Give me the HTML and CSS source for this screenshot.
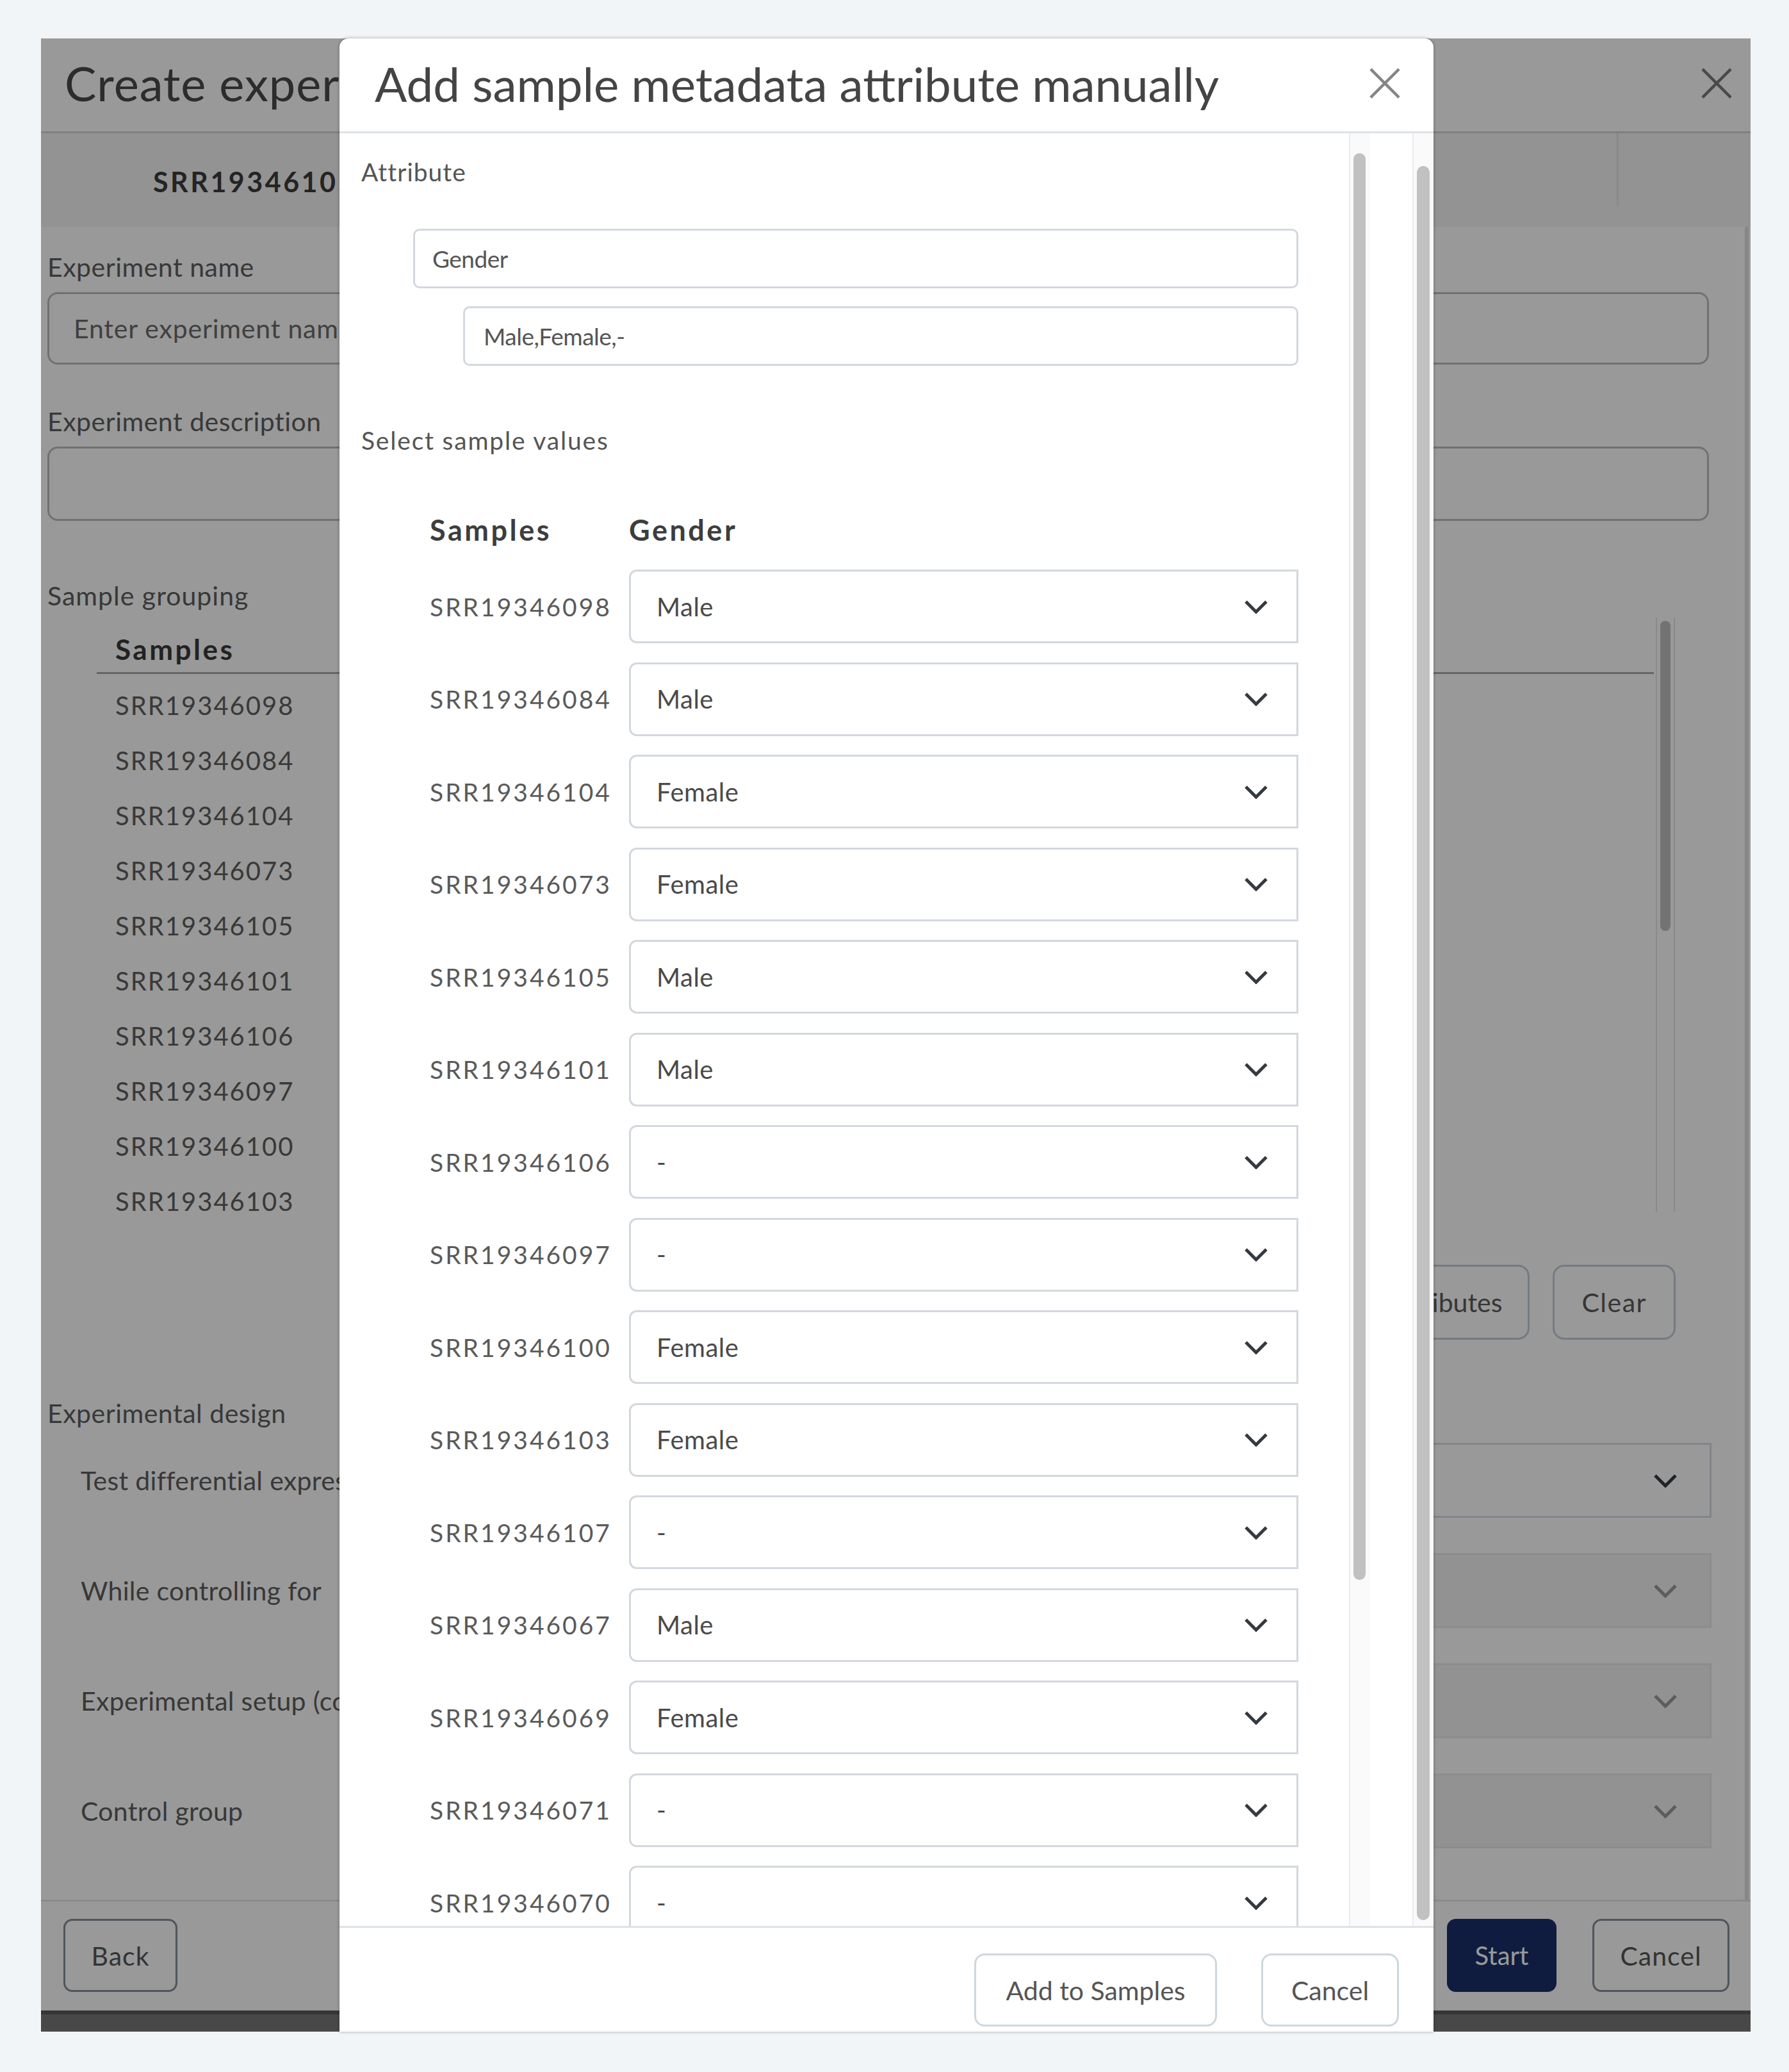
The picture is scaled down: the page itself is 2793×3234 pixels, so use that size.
FILE: index.html
```html
<!DOCTYPE html>
<html lang="en">
<head>
    <meta charset="UTF-8">
    <meta name="viewport" content="width=device-width, initial-scale=1.0">
    <title>Create experiment</title>
    <link rel="stylesheet" href="styles.css">
</head>
<body>
    <div class="wizard">
        <div class="wizard-header">
            <h1>Create experiment</h1>
            <span class="close-icon">
                <svg viewBox="0 0 52 52"><path d="M3 3 L49 49 M49 3 L3 49"/></svg>
            </span>
        </div>

        <div class="wizard-tabs">
            <div class="tab-cell main">SRR19346105</div>
            <div class="tab-cell"></div>
        </div>

        <div class="wizard-body">
            <label class="field-label">Experiment name</label>
            <div class="text-input placeholder">Enter experiment name</div>

            <label class="field-label">Experiment description</label>
            <div class="text-input tall"></div>

            <label class="field-label grouping">Sample grouping</label>
            <div class="grouping-box">
                <div class="grouping-table">
                    <div class="grouping-head">Samples</div>
                    <div class="grouping-rows">
                        <div>SRR19346098</div>
                        <div>SRR19346084</div>
                        <div>SRR19346104</div>
                        <div>SRR19346073</div>
                        <div>SRR19346105</div>
                        <div>SRR19346101</div>
                        <div>SRR19346106</div>
                        <div>SRR19346097</div>
                        <div>SRR19346100</div>
                        <div>SRR19346103</div>
                    </div>
                </div>
                <div class="bg-scroll"><div class="bg-thumb"></div></div>
            </div>
            <div class="grouping-actions">
                <button class="outline-btn attr-btn">Add attributes</button>
                <button class="outline-btn">Clear</button>
            </div>

            <label class="field-label design">Experimental design</label>
            <div class="design-list">
                <div class="design-row">
                    <span>Test differential expression due to</span>
                    <div class="design-select"><svg class="chevron" viewBox="0 0 38 22"><path d="M3 3 L19 19 L35 3"/></svg></div>
                </div>
                <div class="design-row">
                    <span>While controlling for</span>
                    <div class="design-select disabled"><svg class="chevron" viewBox="0 0 38 22"><path d="M3 3 L19 19 L35 3"/></svg></div>
                </div>
                <div class="design-row">
                    <span>Experimental setup (condition)</span>
                    <div class="design-select disabled"><svg class="chevron" viewBox="0 0 38 22"><path d="M3 3 L19 19 L35 3"/></svg></div>
                </div>
                <div class="design-row">
                    <span>Control group</span>
                    <div class="design-select disabled"><svg class="chevron" viewBox="0 0 38 22"><path d="M3 3 L19 19 L35 3"/></svg></div>
                </div>
            </div>
        </div>

        <div class="wizard-footer">
            <button class="outline-btn dark">Back</button>
            <div class="footer-right">
                <button class="start-btn">Start</button>
                <button class="outline-btn dark">Cancel</button>
            </div>
        </div>
        <div class="wizard-strip"></div>

        <div class="overlay"></div>

        <div class="modal">
            <div class="modal-header">
                <h2>Add sample metadata attribute manually</h2>
                <span class="close-icon">
                    <svg viewBox="0 0 52 52"><path d="M3 3 L49 49 M49 3 L3 49"/></svg>
                </span>
            </div>

            <div class="modal-body">
                <div class="modal-content">
                    <div class="modal-label">Attribute</div>
                    <div class="attr-input name">Gender</div>
                    <div class="attr-input values">Male,Female,-</div>

                    <div class="modal-label select-title">Select sample values</div>

                    <div class="value-table">
                        <div class="value-head">
                            <span class="col-sample">Samples</span>
                            <span>Gender</span>
                        </div>
                        <div class="value-rows" id="valueRows"></div>
                    </div>
                </div>
                <div class="scroll-track inner"><div class="scroll-thumb"></div></div>
                <div class="scroll-gap"></div>
                <div class="scroll-track outer"><div class="scroll-thumb"></div></div>
            </div>

            <div class="modal-footer">
                <button class="light-btn">Add to Samples</button>
                <button class="light-btn">Cancel</button>
            </div>
        </div>
    </div>

    <script>
        const samples = [
            ['SRR19346098', 'Male'],
            ['SRR19346084', 'Male'],
            ['SRR19346104', 'Female'],
            ['SRR19346073', 'Female'],
            ['SRR19346105', 'Male'],
            ['SRR19346101', 'Male'],
            ['SRR19346106', '-'],
            ['SRR19346097', '-'],
            ['SRR19346100', 'Female'],
            ['SRR19346103', 'Female'],
            ['SRR19346107', '-'],
            ['SRR19346067', 'Male'],
            ['SRR19346069', 'Female'],
            ['SRR19346071', '-'],
            ['SRR19346070', '-']
        ];

        const valueRows = document.getElementById('valueRows');

        // one row per sample: id + fake select
        samples.forEach(([id, value]) => {
            const row = document.createElement('div');
            row.className = 'value-row';
            row.innerHTML = `
                <span class="col-sample">${id}</span>
                <div class="value-select">
                    <span>${value}</span>
                    <svg class="chevron" viewBox="0 0 38 22"><path d="M3 3 L19 19 L35 3"/></svg>
                </div>`;
            valueRows.appendChild(row);
        });
    </script>
</body>
</html>
```

FILE: styles.css
```css
* {
    box-sizing: border-box;
}

body {
    margin: 0;
    padding: 60px 60px 0 64px;
    background-color: #f2f5f8;
    font-family: Lato, "Noto Sans", sans-serif;
    color: #555;
    height: 3234px;
    overflow: hidden;
}

button {
    font-family: inherit;
    cursor: pointer;
}

/* ---------- background wizard ---------- */

.wizard {
    position: relative;
    width: 2669px;
    height: 3111px;
    background-color: #fff;
    display: flex;
    flex-direction: column;
}

.wizard-header {
    height: 148px;
    flex-shrink: 0;
    display: flex;
    align-items: center;
    justify-content: space-between;
    padding: 0 28px 6px 37px;
    border-bottom: 3px solid #d6d6d6;
}

.wizard-header h1 {
    margin: 0;
    font-size: 74px;
    font-weight: 400;
    letter-spacing: 1px;
    color: #4a4a4a;
}

.close-icon {
    width: 50px;
    height: 50px;
    display: block;
}

.close-icon svg {
    width: 100%;
    height: 100%;
    stroke: #7a7a7a;
    stroke-width: 4.5;
    fill: none;
}

.wizard-tabs {
    height: 146px;
    flex-shrink: 0;
    display: flex;
    background-color: #f6f6f6;
}

.tab-cell.main {
    width: 2463px;
    padding: 50px 0 0 175px;
    font-size: 43px;
    font-weight: 700;
    letter-spacing: 3.5px;
    color: #3c3c3c;
    border-right: 3px solid #e6e6e6;
    height: 113px;
}

.wizard-body {
    flex: 1;
    padding: 39px 0 0 10px;
    display: flex;
    flex-direction: column;
    border-right: 6px solid #e2e2e2;
    margin-right: 3px;
}

.field-label {
    display: block;
    font-size: 41px;
    line-height: 48px;
    letter-spacing: 0.5px;
    color: #5e5e5e;
}

.field-label.grouping {
    letter-spacing: 1px;
}

.text-input {
    width: 2594px;
    height: 113px;
    margin: 15px 0 65px;
    border: 3px solid #bdbdbd;
    border-radius: 16px;
    padding: 0 38px;
    display: flex;
    align-items: center;
    font-size: 41px;
    letter-spacing: 0.8px;
    color: #6c6c6c;
}

.text-input.tall {
    height: 116px;
    margin-bottom: 93px;
}

.grouping-box {
    margin: 10px 0 0 77px;
    width: 2464px;
    height: 928px;
    display: flex;
    overflow: hidden;
}

.grouping-table {
    flex: 1;
}

.grouping-head {
    height: 88px;
    padding: 25px 0 0 29px;
    font-size: 44px;
    line-height: 48px;
    font-weight: 700;
    letter-spacing: 3.5px;
    color: #3a3a3a;
    border-bottom: 3px solid #ababab;
}

.grouping-rows {
    padding-top: 6px;
}

.grouping-rows div {
    height: 86px;
    line-height: 86px;
    padding-left: 29px;
    font-size: 40px;
    letter-spacing: 2px;
    color: #606060;
}

.bg-scroll {
    width: 30px;
    margin-left: 3px;
    padding: 5px 5px 0;
    border-left: 2px solid #e6e6e6;
    border-right: 2px solid #e6e6e6;
}

.bg-thumb {
    height: 484px;
    background-color: #c0c0c0;
    border-radius: 10px;
}

.grouping-actions {
    width: 2542px;
    display: flex;
    justify-content: flex-end;
    gap: 36px;
    margin: 82px 0 91px;
}

.outline-btn {
    height: 117px;
    padding: 0 42px;
    background: transparent;
    border: 3px solid #c2ced9;
    border-radius: 18px;
    font-size: 41px;
    letter-spacing: 1.5px;
    color: #5a5a5a;
}

.outline-btn.attr-btn {
    padding-right: 40px;
    letter-spacing: 0;
}

.outline-btn.dark {
    height: 114px;
    border-color: #848e98;
    border-radius: 14px;
    color: #555;
    letter-spacing: 1px;
}

.design-list {
    margin-top: 22px;
    display: flex;
    flex-direction: column;
    gap: 55px;
}

.design-row {
    display: flex;
    align-items: center;
    justify-content: space-between;
    width: 2598px;
    padding-left: 52px;
}

.design-row span {
    font-size: 41px;
    letter-spacing: 0.3px;
    color: #5e5e5e;
}

.design-select {
    width: 1700px;
    height: 117px;
    border: 3px solid #d8dde3;
    background-color: #fff;
    display: flex;
    align-items: center;
    justify-content: flex-end;
    padding-right: 50px;
}

.design-select.disabled {
    background-color: #f3f3f3;
    border-color: #e9e9e9;
}

.design-select.disabled .chevron {
    stroke: #9a9a9a;
}

.chevron {
    width: 38px;
    height: 22px;
    fill: none;
    stroke: #343a40;
    stroke-width: 5;
}

.wizard-footer {
    height: 173px;
    flex-shrink: 0;
    border-top: 3px solid #e6e6e6;
    display: flex;
    justify-content: space-between;
    padding: 27px 33px 0 35px;
}

.wizard-footer .outline-btn {
    width: 178px;
    padding: 0;
}

.footer-right {
    display: flex;
    gap: 56px;
}

.footer-right .outline-btn {
    width: 214px;
}

.start-btn {
    width: 171px;
    height: 114px;
    border: none;
    border-radius: 14px;
    background-color: #1b2f69;
    color: #fff;
    font-size: 40px;
}

.wizard-strip {
    height: 33px;
    flex-shrink: 0;
    background-color: #787878;
    border-top: 6px solid #5a5a5a;
}

.overlay {
    position: absolute;
    top: 0;
    left: 0;
    width: 100%;
    height: 100%;
    background-color: rgba(0, 0, 0, 0.4);
}

/* ---------- modal ---------- */

.modal {
    position: absolute;
    top: 0;
    left: 466px;
    width: 1708px;
    height: 3111px;
    background-color: #fff;
    border-radius: 14px 14px 0 0;
    box-shadow: 0 0 5px rgba(0, 0, 0, 0.35);
    display: flex;
    flex-direction: column;
    overflow: hidden;
}

.modal-header {
    height: 148px;
    flex-shrink: 0;
    display: flex;
    align-items: center;
    justify-content: space-between;
    padding: 0 51px 6px 55px;
    border-bottom: 3px solid #dee2e6;
}

.modal-header h2 {
    margin: 0;
    font-size: 74.5px;
    font-weight: 400;
    color: #444;
}

.modal-header .close-icon svg {
    stroke: #858585;
}

.modal-body {
    flex: 1;
    display: flex;
    overflow: hidden;
}

.modal-content {
    flex: 1;
    padding: 36px 79px 0 34px;
    overflow: hidden;
}

.modal-label {
    font-size: 39px;
    line-height: 48px;
    letter-spacing: 1px;
    color: #555;
}

.select-title {
    margin-top: 92px;
    letter-spacing: 1.8px;
}

.attr-input {
    height: 93px;
    border: 3px solid #d3d8de;
    border-radius: 10px;
    display: flex;
    align-items: center;
    font-size: 37px;
    color: #555;
    letter-spacing: -0.5px;
}

.attr-input.name {
    margin: 65px 0 0 81px;
    padding-left: 27px;
}

.attr-input.values {
    margin: 28px 0 0 159px;
    padding-left: 29px;
}

.value-table {
    margin: 92px 0 0 107px;
}

.value-head {
    display: flex;
    font-size: 45px;
    line-height: 48px;
    font-weight: 700;
    letter-spacing: 3.5px;
    color: #3d3d3d;
}

.col-sample {
    width: 311px;
    flex-shrink: 0;
}

.value-rows {
    padding-top: 38px;
    display: flex;
    flex-direction: column;
    gap: 29.5px;
}

.value-row {
    display: flex;
    align-items: center;
    height: 115px;
}

.value-row .col-sample {
    font-size: 39px;
    letter-spacing: 3px;
    color: #5a5a5a;
}

.value-select {
    flex: 1;
    height: 115px;
    border: 3px solid #d3d8de;
    border-radius: 12px 0 0 12px;
    display: flex;
    align-items: center;
    justify-content: space-between;
    padding: 0 44px 0 40px;
    font-size: 40px;
    letter-spacing: 0.5px;
    color: #4a4a4a;
}

.scroll-track {
    flex-shrink: 0;
    background-color: #fafafa;
    border-left: 2px solid #ececec;
}

.scroll-track.inner {
    width: 33px;
    padding: 31px 7px 0 5px;
}

.scroll-track.inner .scroll-thumb {
    height: 2227px;
}

.scroll-gap {
    width: 66px;
    flex-shrink: 0;
}

.scroll-track.outer {
    width: 33px;
    padding: 51px 6px 0 5px;
}

.scroll-track.outer .scroll-thumb {
    height: 2738px;
}

.scroll-thumb {
    background-color: #c1c1c1;
    border-radius: 10px;
}

.modal-footer {
    height: 165px;
    flex-shrink: 0;
    border-top: 3px solid #dee2e6;
    display: flex;
    justify-content: flex-end;
    gap: 69px;
    padding: 40px 54px 0 0;
}

.light-btn {
    height: 114px;
    padding: 0 40px;
    background-color: #fff;
    border: 3px solid #ccd8de;
    border-radius: 16px;
    font-size: 41px;
    color: #555;
}

.light-btn:first-child {
    width: 379px;
}

.light-btn:last-child {
    width: 215px;
}
```
